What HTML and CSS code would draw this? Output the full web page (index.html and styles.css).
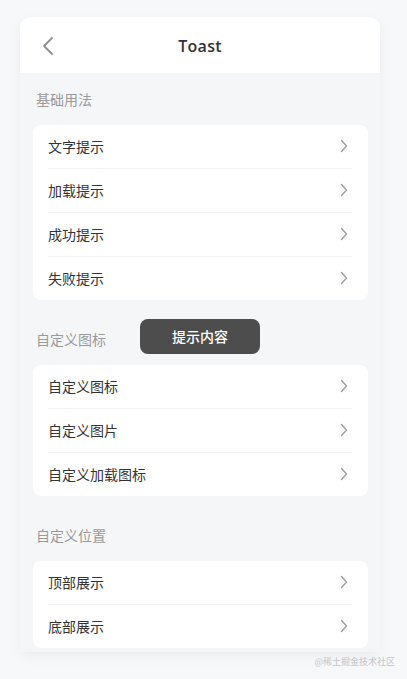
FILE: index.html
```html
<!DOCTYPE html>
<html lang="zh">
<head>
<meta charset="utf-8">
<title>Toast</title>
<link rel="stylesheet" href="styles.css">
</head>
<body>
<div class="frame">
  <header class="nav">
    <svg class="back" width="12" height="20" viewBox="0 0 12 20"><path d="M10 2 L2 10 L10 18" fill="none" stroke="#909090" stroke-width="1.8" stroke-linecap="round" stroke-linejoin="round"/></svg>
    <div class="nav-title">Toast</div>
  </header>
  <main class="content">
    <section class="group">
      <h2 class="group-title">基础用法</h2>
      <div class="card">
        <div class="row"><span>文字提示</span><svg class="chev" width="8" height="14" viewBox="0 0 8 14"><path d="M1.5 1.5 L6.5 7 L1.5 12.5" fill="none" stroke="#a0a0a0" stroke-width="1.5" stroke-linecap="round" stroke-linejoin="round"/></svg></div>
        <div class="row"><span>加载提示</span><svg class="chev" width="8" height="14" viewBox="0 0 8 14"><path d="M1.5 1.5 L6.5 7 L1.5 12.5" fill="none" stroke="#a0a0a0" stroke-width="1.5" stroke-linecap="round" stroke-linejoin="round"/></svg></div>
        <div class="row"><span>成功提示</span><svg class="chev" width="8" height="14" viewBox="0 0 8 14"><path d="M1.5 1.5 L6.5 7 L1.5 12.5" fill="none" stroke="#a0a0a0" stroke-width="1.5" stroke-linecap="round" stroke-linejoin="round"/></svg></div>
        <div class="row"><span>失败提示</span><svg class="chev" width="8" height="14" viewBox="0 0 8 14"><path d="M1.5 1.5 L6.5 7 L1.5 12.5" fill="none" stroke="#a0a0a0" stroke-width="1.5" stroke-linecap="round" stroke-linejoin="round"/></svg></div>
      </div>
    </section>
    <section class="group">
      <h2 class="group-title">自定义图标</h2>
      <div class="card">
        <div class="row"><span>自定义图标</span><svg class="chev" width="8" height="14" viewBox="0 0 8 14"><path d="M1.5 1.5 L6.5 7 L1.5 12.5" fill="none" stroke="#a0a0a0" stroke-width="1.5" stroke-linecap="round" stroke-linejoin="round"/></svg></div>
        <div class="row"><span>自定义图片</span><svg class="chev" width="8" height="14" viewBox="0 0 8 14"><path d="M1.5 1.5 L6.5 7 L1.5 12.5" fill="none" stroke="#a0a0a0" stroke-width="1.5" stroke-linecap="round" stroke-linejoin="round"/></svg></div>
        <div class="row"><span>自定义加载图标</span><svg class="chev" width="8" height="14" viewBox="0 0 8 14"><path d="M1.5 1.5 L6.5 7 L1.5 12.5" fill="none" stroke="#a0a0a0" stroke-width="1.5" stroke-linecap="round" stroke-linejoin="round"/></svg></div>
      </div>
    </section>
    <section class="group">
      <h2 class="group-title">自定义位置</h2>
      <div class="card">
        <div class="row"><span>顶部展示</span><svg class="chev" width="8" height="14" viewBox="0 0 8 14"><path d="M1.5 1.5 L6.5 7 L1.5 12.5" fill="none" stroke="#a0a0a0" stroke-width="1.5" stroke-linecap="round" stroke-linejoin="round"/></svg></div>
        <div class="row"><span>底部展示</span><svg class="chev" width="8" height="14" viewBox="0 0 8 14"><path d="M1.5 1.5 L6.5 7 L1.5 12.5" fill="none" stroke="#a0a0a0" stroke-width="1.5" stroke-linecap="round" stroke-linejoin="round"/></svg></div>
      </div>
    </section>
  </main>
</div>
<div class="toast">提示内容</div>
<div class="watermark">@稀土掘金技术社区</div>
</body>
</html>
```

FILE: styles.css
```css
* { box-sizing: border-box; }
html, body { margin: 0; padding: 0; }
body {
  background: #f7f8fa;
  font-family: "Open Sans", "Noto Sans CJK SC", sans-serif;
  width: 407px;
  height: 679px;
  overflow: hidden;
  position: relative;
}
.frame {
  margin: 17px 0 0 20px;
  width: 360px;
  background: #f5f6f8;
  border-radius: 10px 10px 0 0;
  box-shadow: 0 4px 14px rgba(0, 0, 0, 0.05);
  padding-bottom: 4px;
}
.nav {
  height: 56px;
  background: #fff;
  border-radius: 10px 10px 0 0;
  position: relative;
  display: flex;
  align-items: center;
  justify-content: center;
  padding-top: 2px;
}
.back {
  position: absolute;
  left: 22px;
  top: 19px;
}
.nav-title {
  font-size: 16px;
  font-weight: 600;
  color: #333;
  letter-spacing: 0.3px;
}
.content {
  padding: 0 12px 0 13px;
}
.group { margin-bottom: 13px; }
.group:last-child { margin-bottom: 0; }
.group-title {
  margin: 0;
  padding: 18px 0 16px 3px;
  font-size: 14px;
  line-height: 18px;
  font-weight: 400;
  color: #9a9a9a;
}
.card {
  background: #fff;
  border-radius: 8px;
  padding: 0 16px 0 15px;
}
.row {
  height: 44px;
  display: flex;
  align-items: center;
  justify-content: space-between;
  font-size: 14px;
  color: #333;
  border-top: 1px solid #f2f2f2;
  padding-bottom: 2px;
}
.row:first-child { border-top: none; height: 43px; }
.chev { margin-right: 4px; margin-top: 1px; }
.toast {
  position: absolute;
  left: 140px;
  top: 319px;
  width: 120px;
  height: 35px;
  border-radius: 8px;
  background: #4d4d4d;
  color: #fff;
  font-size: 14px;
  font-weight: 500;
  display: flex;
  align-items: center;
  justify-content: center;
  padding-bottom: 2px;
}
.watermark {
  position: absolute;
  right: 12px;
  top: 655px;
  font-size: 9px;
  color: #c4c6c9;
  font-family: "Noto Sans CJK SC", sans-serif;
}
```
